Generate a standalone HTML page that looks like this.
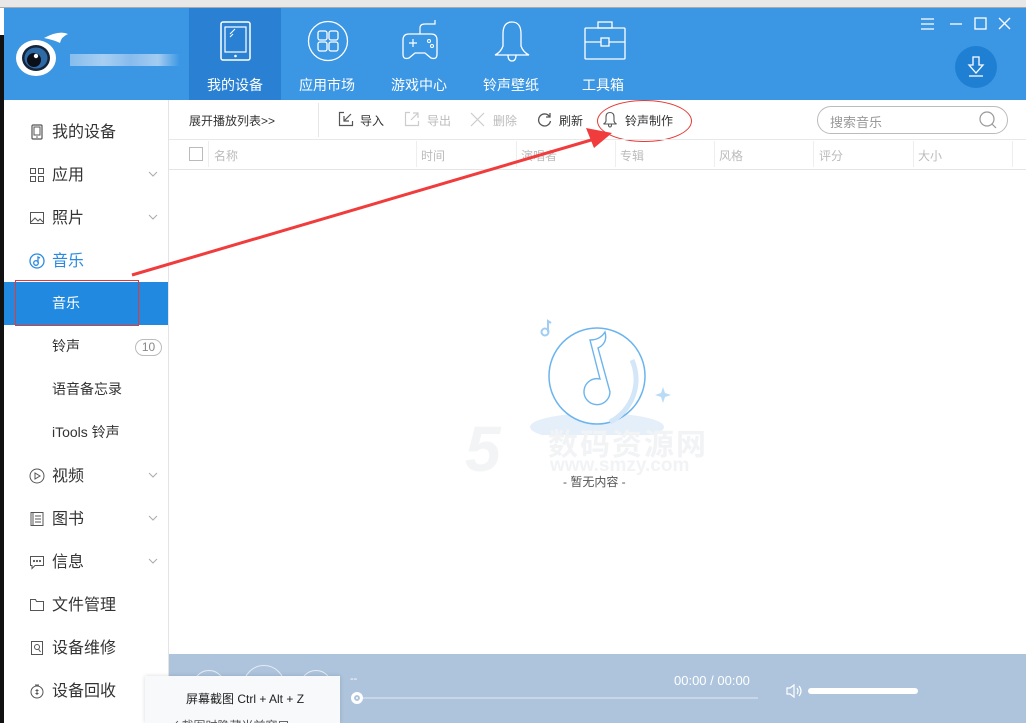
<!DOCTYPE html>
<html><head><meta charset="utf-8"><style>
*{margin:0;padding:0;box-sizing:border-box}
body{width:1026px;height:723px;overflow:hidden;background:#fff;font-family:"Liberation Sans","Noto Sans CJK SC",sans-serif;position:relative}
.a{position:absolute}
.top{left:0;top:0;width:1026px;height:8px;background:#e8e8e8;border-bottom:1px solid #aaa}
.lb{left:0;top:35px;width:4px;height:688px;background:#111}
.hd{left:4px;top:8px;width:1022px;height:92px;background:#3b96e3}
.tab{top:8px;width:92px;height:92px;color:#fff;font-size:14px;text-align:center}
.tab span{position:absolute;left:0;right:0;top:67px}
.tab svg{position:absolute;left:26px;top:12px}
.side{left:4px;top:100px;width:165px;height:623px;border-right:1px solid #e4e4e4;background:#fff}
.it{position:absolute;left:0;width:164px;height:43px;font-size:16px;color:#333;line-height:43px}
.it .t{position:absolute;left:48px}
.it .ic{position:absolute;left:25px;top:13px;width:16px;height:16px}
.it .chev{position:absolute;left:144px;top:17px;width:10px;height:6px}
.sub{font-size:14px}
.tb{font-size:12px;color:#333;top:112px}
.dis{color:#bbb}
.col{top:147px;font-size:12px;color:#bbb}
.sep{top:141px;width:1px;height:26px;background:#eee}
</style></head><body>
<div class="a top"></div>
<div class="a lb"></div>
<div class="a hd"></div>
<!-- logo -->
<svg class="a" style="left:14px;top:28px" width="60" height="50" viewBox="0 0 60 50"><path d="M30 10 Q45 2 54 6 Q47 9 46 15 Q40 12 30 10Z" fill="#fff"/><ellipse cx="22" cy="30" rx="20" ry="18" fill="#fff"/><ellipse cx="22" cy="30" rx="14" ry="13" fill="#15253a"/><ellipse cx="22" cy="30" rx="11.5" ry="10.5" fill="#2e6aa6"/><circle cx="20" cy="32" r="7" fill="#0b0f18"/><circle cx="22" cy="28" r="2.2" fill="#fff"/></svg>
<div class="a" style="left:70px;top:54px;width:110px;height:12px;background:linear-gradient(90deg,#8ec1ee,#b4d5f4 30%,#8fc0ee 55%,#b0d2f3 80%,#3b96e3);opacity:.9"></div>
<div class="a tab" style="left:189px;background:#2a80d2"><svg width="40" height="42"><rect x="6" y="2" width="29" height="38" rx="2" fill="none" stroke="#fff" stroke-width="1.5"/><rect x="10" y="7" width="21" height="25" fill="none" stroke="#fff" stroke-width="1.2"/><circle cx="20.5" cy="36" r="1.3" fill="#fff"/><path d="M15 14l5-5M15 17l3-3" stroke="#fff"/></svg><span>我的设备</span></div>
<div class="a tab" style="left:281px"><svg width="42" height="42"><circle cx="21" cy="21" r="19.5" fill="none" stroke="#fff" stroke-width="1.3"/><rect x="11" y="11" width="9" height="9" rx="2" fill="none" stroke="#fff" stroke-width="1.3"/><rect x="22" y="11" width="9" height="9" rx="2" fill="none" stroke="#fff" stroke-width="1.3"/><rect x="11" y="22" width="9" height="9" rx="2" fill="none" stroke="#fff" stroke-width="1.3"/><rect x="22" y="22" width="9" height="9" rx="2" fill="none" stroke="#fff" stroke-width="1.3"/></svg><span>应用市场</span></div>
<div class="a tab" style="left:373px"><svg width="44" height="42"><path d="M4 20 Q4 14 10 14 H32 Q38 14 38 20 V34 Q38 40 32 38 L26 33 H16 L10 38 Q4 40 4 34 Z" fill="none" stroke="#fff" stroke-width="1.3"/><path d="M21 14 V8 Q21 4 26 4 H36 V0" fill="none" stroke="#fff" stroke-width="1.2"/><path d="M10 23h8M14 19v8" stroke="#fff" stroke-width="1.2"/><circle cx="30" cy="21" r="1.5" fill="none" stroke="#fff"/><circle cx="33" cy="26" r="1.5" fill="none" stroke="#fff"/></svg><span>游戏中心</span></div>
<div class="a tab" style="left:465px"><svg width="44" height="44"><path d="M21 2 Q12 2 12 14 V26 Q10 32 4 35 H38 Q32 32 30 26 V14 Q30 2 21 2Z" fill="none" stroke="#fff" stroke-width="1.3"/><path d="M17 35 Q17 41 21 41 Q25 41 25 35" fill="none" stroke="#fff" stroke-width="1.3"/></svg><span>铃声壁纸</span></div>
<div class="a tab" style="left:557px"><svg width="44" height="42"><rect x="2" y="8" width="40" height="31" rx="1" fill="none" stroke="#fff" stroke-width="1.3"/><rect x="15" y="2" width="14" height="6" fill="none" stroke="#fff" stroke-width="1.3"/><path d="M2 22H18M26 22H42" stroke="#fff" stroke-width="1.3"/><rect x="18" y="18" width="8" height="8" fill="none" stroke="#fff" stroke-width="1.3"/></svg><span>工具箱</span></div>
<svg class="a" style="left:915px;top:15px" width="105" height="20" stroke="#fff" stroke-width="1.3" fill="none"><path d="M6 4h13M6 9h13M6 14h13"/><path d="M35 9h12"/><rect x="60" y="3" width="11" height="11"/><path d="M84 3l11 11M95 3l-11 11"/></svg>
<div class="a" style="left:955px;top:46px;width:42px;height:42px;border-radius:50%;background:#1f7fd2"></div>
<svg class="a" style="left:966px;top:55px" width="20" height="24" fill="none" stroke="#fff" stroke-width="1.3"><path d="M7 2h6v8h4l-7 8-7-8h4z"/><path d="M3 21h14"/></svg>
<!-- sidebar -->
<div class="a side">
<div class="it" style="top:11px"><svg class="ic" viewBox="0 0 16 16"><rect x="3" y="1" width="10" height="14" rx="1" fill="none" stroke="#555" stroke-width="1.2"/><rect x="5" y="3" width="6" height="8" fill="none" stroke="#555"/><circle cx="8" cy="13" r=".8" fill="#555"/></svg><span class="t">我的设备</span></div>
<div class="it" style="top:54px"><svg class="ic" viewBox="0 0 16 16" fill="none" stroke="#555"><rect x="1.5" y="1.5" width="5" height="5"/><rect x="9.5" y="1.5" width="5" height="5"/><rect x="1.5" y="9.5" width="5" height="5"/><rect x="9.5" y="9.5" width="5" height="5"/></svg><span class="t">应用</span><svg class="chev"><path d="M1 1l4 4 4-4" fill="none" stroke="#aaa"/></svg></div>
<div class="it" style="top:97px"><svg class="ic" viewBox="0 0 16 16" fill="none" stroke="#555"><rect x="1.5" y="2.5" width="13" height="11"/><path d="M2 12l4-4 3 3 2-2 3 3"/></svg><span class="t">照片</span><svg class="chev"><path d="M1 1l4 4 4-4" fill="none" stroke="#aaa"/></svg></div>
<div class="it" style="top:140px;color:#2b8ae0"><svg class="ic" viewBox="0 0 16 16" fill="none" stroke="#2b8ae0" stroke-width="1.3"><circle cx="8" cy="8" r="7"/><circle cx="7" cy="10" r="2.3"/><path d="M9 10V4l2 1"/></svg><span class="t">音乐</span></div>
<div class="it sub" style="top:182px;background:#2189e0;color:#fff"><span class="t">音乐</span></div>
<div class="it sub" style="top:225px"><span class="t">铃声</span><span style="position:absolute;left:131px;top:14px;width:27px;height:17px;border:1px solid #bbb;border-radius:9px;font-size:12px;line-height:15px;text-align:center;color:#888">10</span></div>
<div class="it sub" style="top:268px"><span class="t">语音备忘录</span></div>
<div class="it sub" style="top:311px"><span class="t">iTools 铃声</span></div>
<div class="it" style="top:355px"><svg class="ic" viewBox="0 0 16 16" fill="none" stroke="#555"><circle cx="8" cy="8" r="7"/><path d="M6 5v6l5-3z"/></svg><span class="t">视频</span><svg class="chev"><path d="M1 1l4 4 4-4" fill="none" stroke="#aaa"/></svg></div>
<div class="it" style="top:398px"><svg class="ic" viewBox="0 0 16 16" fill="none" stroke="#555"><rect x="2" y="1.5" width="12" height="13"/><path d="M4 1.5v13M6 5h6M6 8h6M6 11h6"/></svg><span class="t">图书</span><svg class="chev"><path d="M1 1l4 4 4-4" fill="none" stroke="#aaa"/></svg></div>
<div class="it" style="top:441px"><svg class="ic" viewBox="0 0 16 16" fill="none" stroke="#555"><path d="M1.5 2.5h13v9H6l-3 3v-3H1.5z"/><circle cx="5" cy="7" r=".6" fill="#555"/><circle cx="8" cy="7" r=".6" fill="#555"/><circle cx="11" cy="7" r=".6" fill="#555"/></svg><span class="t">信息</span><svg class="chev"><path d="M1 1l4 4 4-4" fill="none" stroke="#aaa"/></svg></div>
<div class="it" style="top:484px"><svg class="ic" viewBox="0 0 16 16" fill="none" stroke="#555"><path d="M1.5 2.5h5l1 2h7v9h-13z"/></svg><span class="t">文件管理</span></div>
<div class="it" style="top:527px"><svg class="ic" viewBox="0 0 16 16" fill="none" stroke="#555"><path d="M2.5 1.5h11v13h-11z"/><circle cx="8" cy="7" r="2.5"/><path d="M9.5 9l2 3"/></svg><span class="t">设备维修</span></div>
<div class="it" style="top:570px"><svg class="ic" viewBox="0 0 16 16" fill="none" stroke="#555"><circle cx="8" cy="9" r="6"/><path d="M6 2h4M8 6v6M6.5 7.5h3M6.5 10.5h3"/></svg><span class="t">设备回收</span></div>
</div>
<div class="a" style="left:15px;top:280px;width:124px;height:46px;border:1px solid #e53935"></div>
<!-- toolbar -->
<div class="a tb" style="left:189px">展开播放列表&gt;&gt;</div>
<div class="a" style="left:318px;top:103px;width:1px;height:34px;background:#e6e6e6"></div>
<svg class="a" style="left:338px;top:111px" width="16" height="16" fill="none" stroke="#555" stroke-width="1.2"><path d="M6 1.5H1.5v13h13V10"/><path d="M13 3L6 10M6 5v5h5"/></svg>
<div class="a tb" style="left:360px">导入</div>
<svg class="a" style="left:404px;top:111px" width="16" height="16" fill="none" stroke="#ccc" stroke-width="1.2"><path d="M6 1.5H1.5v13h13V10"/><path d="M7 9l7-7M9 2h5v5"/></svg>
<div class="a tb dis" style="left:427px">导出</div>
<svg class="a" style="left:470px;top:112px" width="15" height="15" stroke="#ccc" stroke-width="1.2"><path d="M1 1l13 13M14 1L1 14"/></svg>
<div class="a tb dis" style="left:493px">删除</div>
<svg class="a" style="left:537px;top:112px" width="15" height="15" fill="none" stroke="#555" stroke-width="1.3"><path d="M12.5 4.5A6 6 0 1 0 13.5 9"/><path d="M13 1v4H9"/></svg>
<div class="a tb" style="left:559px">刷新</div>
<svg class="a" style="left:602px;top:111px" width="16" height="17" fill="none" stroke="#555" stroke-width="1.1"><path d="M8 1.5Q4 1.5 4 6v4Q3.5 12 1.5 13h13Q12.5 12 12 10V6Q12 1.5 8 1.5z"/><path d="M6.5 13.5Q6.5 16 8 16t1.5-2.5"/></svg>
<div class="a tb" style="left:625px">铃声制作</div>
<div class="a" style="left:597px;top:100px;width:95px;height:42px;border:1px solid #e53935;border-radius:50%"></div>
<div class="a" style="left:817px;top:106px;width:191px;height:28px;border:1px solid #bbb;border-radius:14px"></div>
<div class="a" style="left:830px;top:112px;font-size:13px;color:#999">搜索音乐</div>
<svg class="a" style="left:978px;top:110px" width="20" height="20" fill="none" stroke="#999" stroke-width="1.2"><circle cx="9" cy="9" r="7"/><path d="M14 14l4 4"/></svg>
<!-- column header -->
<div class="a" style="left:169px;top:139px;width:857px;height:1px;background:#e8e8e8"></div>
<div class="a" style="left:169px;top:169px;width:857px;height:1px;background:#e4e4e4"></div>
<div class="a" style="left:189px;top:147px;width:14px;height:14px;border:1px solid #bbb"></div>
<div class="a sep" style="left:208px"></div>
<div class="a col" style="left:214px">名称</div>
<div class="a sep" style="left:416px"></div><div class="a col" style="left:421px">时间</div>
<div class="a sep" style="left:516px"></div><div class="a col" style="left:521px">演唱者</div>
<div class="a sep" style="left:615px"></div><div class="a col" style="left:620px">专辑</div>
<div class="a sep" style="left:714px"></div><div class="a col" style="left:719px">风格</div>
<div class="a sep" style="left:813px"></div><div class="a col" style="left:819px">评分</div>
<div class="a sep" style="left:913px"></div><div class="a col" style="left:918px">大小</div>
<div class="a sep" style="left:1012px"></div>
<!-- empty illustration -->
<svg class="a" style="left:520px;top:315px" width="160" height="120"><ellipse cx="77" cy="112" rx="67" ry="14" fill="#e5effa"/><circle cx="77" cy="61" r="48" fill="#fff" stroke="#6cb4ee" stroke-width="1.5"/><path d="M112 45 A48 48 0 0 1 90 107" fill="none" stroke="#d3e7f9" stroke-width="5"/><path d="M70 25 Q80 25 85 17 Q88 28 78 33 L90 77 A13 13 0 1 1 80 64 Z" fill="none" stroke="#6cb4ee" stroke-width="1.4"/><circle cx="25" cy="17" r="3.5" fill="none" stroke="#9fcdf3" stroke-width="2"/><path d="M28 17V6l3 2" fill="none" stroke="#9fcdf3" stroke-width="2"/><path d="M143 72l2 6 6 2-6 2-2 6-2-6-6-2 6-2z" fill="#b9dcf6"/></svg>
<div class="a" style="left:548px;top:420px;font-size:30px;font-weight:bold;color:#f1f3f5;letter-spacing:2px">数码资源网</div>
<div class="a" style="left:550px;top:455px;font-size:19px;font-weight:bold;color:#f1f3f5">www.smzy.com</div>
<div class="a" style="left:465px;top:412px;font-size:64px;font-weight:bold;color:#f3f4f5;font-style:italic">5</div>
<div class="a" style="left:563px;top:473px;font-size:12px;color:#555">- 暂无内容 -</div>
<svg class="a" style="left:0;top:0" width="1026" height="723"><path d="M132 275 L598 138" stroke="#f03c3c" stroke-width="3"/><path d="M612 133 L586 128 L594 148 Z" fill="#f03c3c"/></svg>
<!-- player -->
<div class="a" style="left:169px;top:654px;width:857px;height:69px;background:#adc4dc"></div>
<div class="a" style="left:193px;top:670px;width:32px;height:32px;border:1px solid #e4ecf4;border-radius:50%"></div>
<div class="a" style="left:243px;top:665px;width:42px;height:42px;border:1px solid #e4ecf4;border-radius:50%"></div>
<div class="a" style="left:300px;top:670px;width:32px;height:32px;border:1px solid #e4ecf4;border-radius:50%"></div>
<div class="a" style="left:350px;top:673px;font-size:11px;color:#fff">--</div>
<div class="a" style="left:674px;top:673px;font-size:13px;color:#fff">00:00 / 00:00</div>
<div class="a" style="left:358px;top:697px;width:400px;height:2px;background:#c8d6e6"></div>
<div class="a" style="left:351px;top:692px;width:12px;height:12px;border-radius:50%;background:#fff;border:3px solid #fff;box-shadow:inset 0 0 0 2px #adc4dc"></div>
<svg class="a" style="left:785px;top:683px" width="18" height="16" fill="none" stroke="#fff" stroke-width="1.2"><path d="M2 5h3l4-3v12l-4-3H2z"/><path d="M12 5q2 3 0 6M14 3q4 5 0 10"/></svg>
<div class="a" style="left:808px;top:688px;width:110px;height:6px;border-radius:3px;background:#fff"></div>
<!-- popup -->
<div class="a" style="left:145px;top:676px;width:195px;height:47px;background:#f7f9fb;box-shadow:0 0 4px rgba(0,0,0,.15);overflow:hidden">
<div class="a" style="left:41px;top:14px;font-size:12px;color:#222;white-space:nowrap">屏幕截图 Ctrl + Alt + Z</div>
<div class="a" style="left:25px;top:41px;font-size:12px;color:#555;white-space:nowrap">✓ 截图时隐藏当前窗口</div>
</div>
</body></html>
